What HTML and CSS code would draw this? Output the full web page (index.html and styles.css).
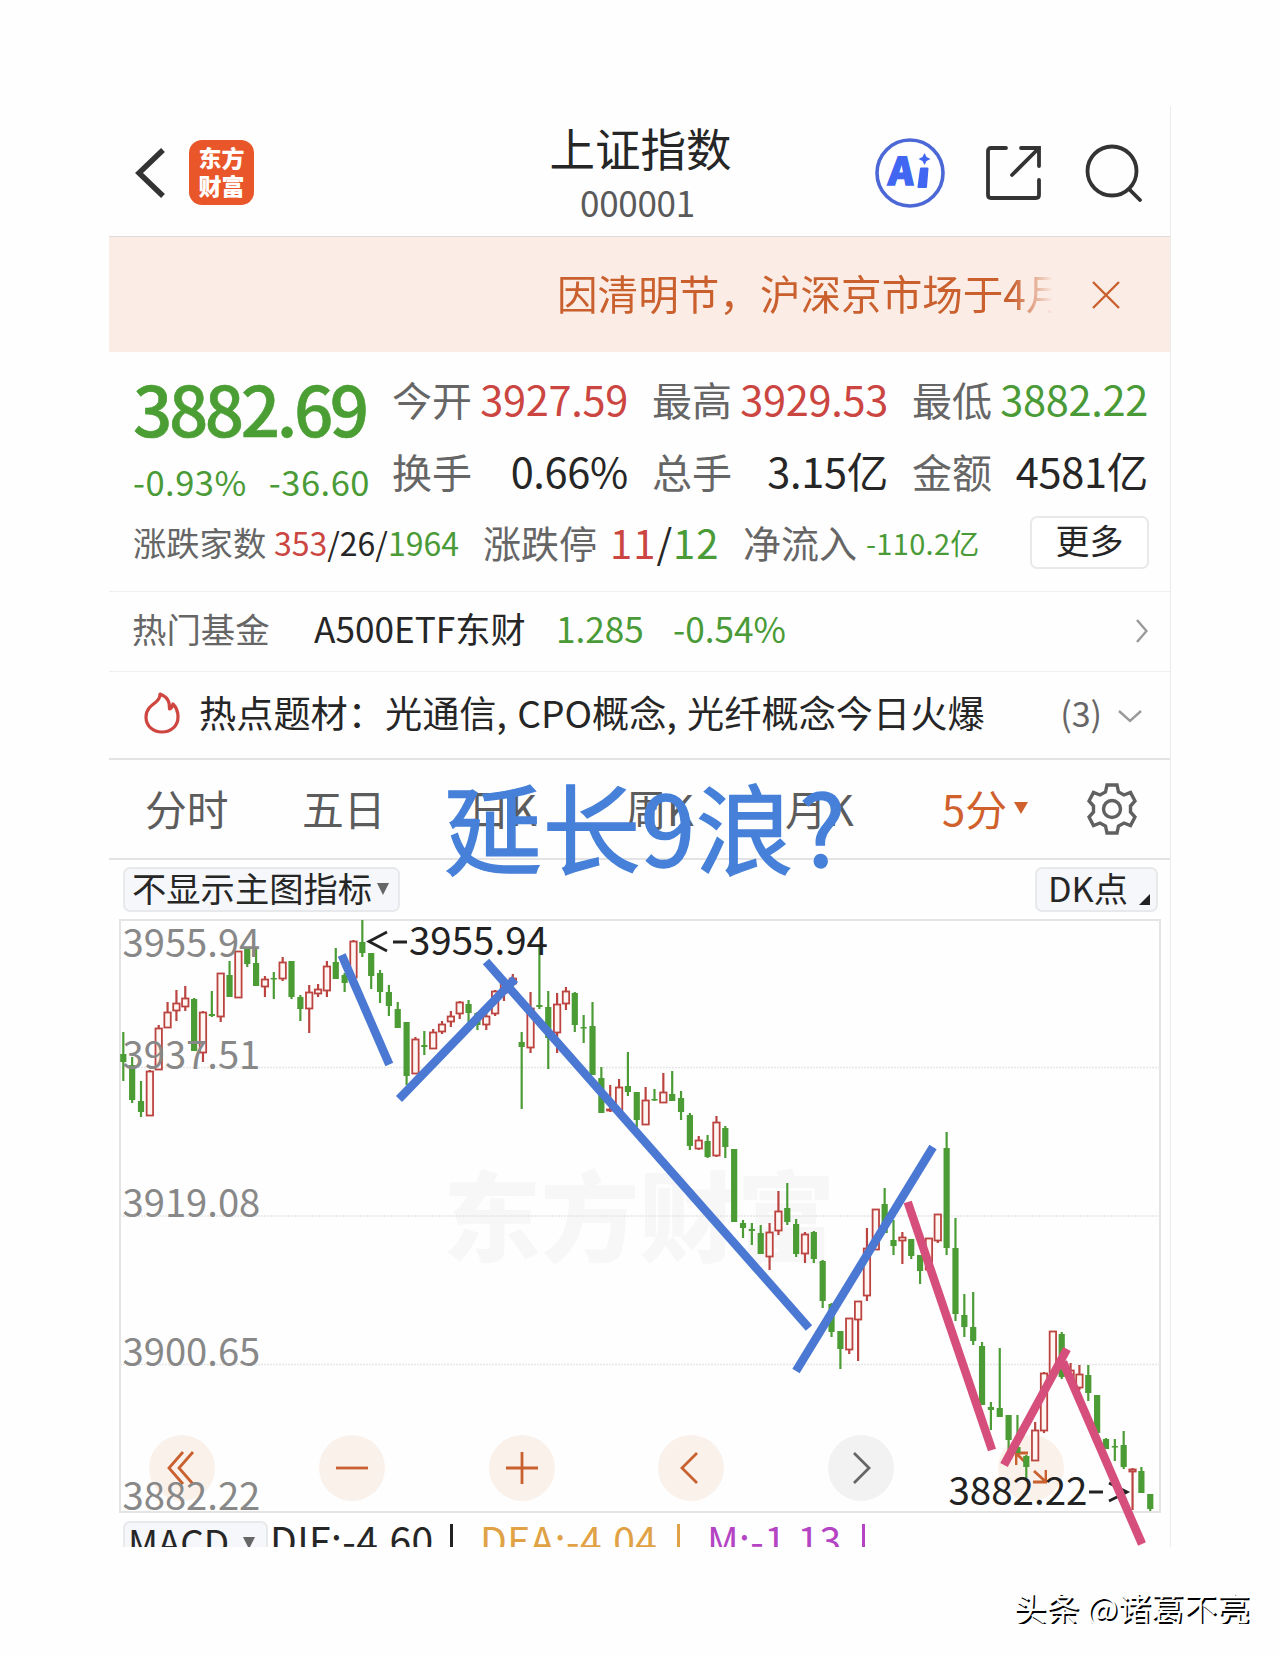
FILE: index.html
```html
<!DOCTYPE html>
<html lang="zh-CN">
<head>
  <meta charset="UTF-8">
  <meta name="viewport" content="width=device-width, initial-scale=1.0">
  <title>上证指数 000001</title>
  <link rel="stylesheet" href="styles.css">
</head>
<body>
  <div class="app">
    <header>
      <div class="header-left">
        <svg class="back" width="34" height="54" viewBox="0 0 34 54"><path d="M29 4 L5 27 L29 50"/></svg>
        <div class="logo">东方<br>财富</div>
      </div>
      <div class="title">
        <h1>上证指数</h1>
        <span>000001</span>
      </div>
      <div class="header-icons">
        <svg width="70" height="70" viewBox="0 0 70 70">
          <circle cx="35" cy="35" r="33" fill="none" stroke="#4c68d6" stroke-width="3.6"/>
          <text x="16" y="47" class="ai-text" transform="skewX(-4)">A</text>
          <path d="M46 30.500 h6.500 l-1.500 18.500 h-7.500z" fill="#4066f2" stroke="#4066f2" stroke-width="2" stroke-linejoin="round"/>
          <path d="M49.500 15 l2 4 4 2 -4 2 -2 4 -2 -4 -4 -2 4 -2z" fill="#4066f2"/>
        </svg>
        <svg class="line-icon share" width="56" height="56" viewBox="0 0 56 56"><path d="M20 3 H5 Q2 3 2 6 V50 Q2 53 5 53 H50 Q53 53 53 50 V35 M35 3 H53 V21 M53 3 L26 30"/></svg>
        <svg class="line-icon" width="58" height="58" viewBox="0 0 58 58"><circle cx="27" cy="27" r="24.5"/><path d="M44 45 L55 56"/></svg>
      </div>
    </header>

    <div class="notice">
      <div class="notice-text">因清明节，沪深京市场于4月</div>
      <svg width="28" height="28" viewBox="0 0 28 28"><path d="M1 1 L27 27 M27 1 L1 27"/></svg>
    </div>

    <section class="quote">
      <div class="quote-top">
        <div class="price-box">
          <div class="price">3882.69</div>
          <div class="change"><span>-0.93%</span><span>-36.60</span></div>
        </div>
        <div class="stats">
          <div class="stat"><label>今开</label><b class="up">3927.59</b></div>
          <div class="stat"><label>最高</label><b class="up">3929.53</b></div>
          <div class="stat"><label>最低</label><b class="down">3882.22</b></div>
          <div class="stat"><label>换手</label><b>0.66%</b></div>
          <div class="stat"><label>总手</label><b>3.15亿</b></div>
          <div class="stat"><label>金额</label><b>4581亿</b></div>
        </div>
      </div>
      <div class="quote-bottom">
        <label class="l1">涨跌家数</label>
        <div class="v1"><span class="up">353</span>/26/<span class="down">1964</span></div>
        <label class="l2">涨跌停</label>
        <div class="v2"><span class="up">11</span>/<span class="down">12</span></div>
        <label class="l3">净流入</label>
        <div class="v3 down">-110.2亿</div>
        <button class="more">更多</button>
      </div>
    </section>

    <div class="fund">
      <label>热门基金</label>
      <span class="fund-name">A500ETF东财</span>
      <span class="down fund-price">1.285</span>
      <span class="down">-0.54%</span>
      <svg class="arrow" width="12" height="24" viewBox="0 0 12 24"><path d="M1 1 L10.500 12 L1 23"/></svg>
    </div>

    <div class="topic">
      <svg class="flame" width="36" height="42" viewBox="0 0 36 42"><path d="M16 2 C24 5 26 11 25.500 17 C28 16 28.500 14 29 12 C33 16 34 21 34 25 C34 34 27 40 18 40 C9 40 2 34 2 25 C2 17 8 13 12 10 C15 7.500 16 5 16 2 Z"/></svg>
      <span class="topic-text">热点题材：光通信, CPO概念, 光纤概念今日火爆</span>
      <span class="count">(3)</span>
      <svg class="arrow" width="24" height="13" viewBox="0 0 24 13"><path d="M1 1 L12 11 L23 1"/></svg>
    </div>

    <nav>
      <a>分时</a>
      <a>五日</a>
      <a>日K</a>
      <a>周K</a>
      <a>月K</a>
      <a class="active">5分<i></i></a>
      <svg class="gear" width="50" height="52" viewBox="0 0 50 52">
        <path d="M20 2 H30 L31.500 9 L37 12 L43.500 9.500 L48 18 L43.500 23 V29 L48 34 L43.500 42.500 L37 40 L31.500 43 L30 50 H20 L18.500 43 L13 40 L6.500 42.500 L2 34 L6.500 29 V23 L2 18 L6.500 9.500 L13 12 L18.500 9 Z"/>
        <circle cx="25" cy="26" r="8.500"/>
      </svg>
    </nav>

    <div class="indicator-bar">
      <button class="pill">不显示主图指标<i class="caret"></i></button>
      <button class="pill pill-dk">DK点<i class="corner"></i></button>
    </div>

    <div class="chart">
      <div class="chart-logo">东方财富</div>
      <div class="controls">
        <div class="ctrl"><svg width="32" height="34" viewBox="0 0 32 34"><path d="M17 1 L3 17 L17 33 M27 1 L13 17 L27 33"/></svg></div>
        <div class="ctrl"><svg width="32" height="34" viewBox="0 0 32 34"><path d="M0 17 H32"/></svg></div>
        <div class="ctrl"><svg width="32" height="34" viewBox="0 0 32 34"><path d="M0 17 H32 M16 1 V33"/></svg></div>
        <div class="ctrl"><svg width="32" height="34" viewBox="0 0 32 34"><path d="M22 2 L7 17 L22 32"/></svg></div>
        <div class="ctrl gray"><svg width="32" height="34" viewBox="0 0 32 34"><path d="M9 2 L24 17 L9 32"/></svg></div>
        <div class="ctrl"><svg width="32" height="34" viewBox="0 0 32 34"><path d="M13 2 H1 V14 M1 2 L12 13 M31 19 V31 H18 M31 31 L19 20"/></svg></div>
      </div>
      <svg class="plot" width="1040" height="592" viewBox="120 920 1040 592">
        <g class="grid">
          <path d="M120 1067.500 H1160"/>
          <path d="M120 1216 H1160"/>
          <path d="M120 1364.500 H1160"/>
        </g>
        <g id="candles"></g>
        <g class="axis">
          <text x="122.500" y="957">3955.94</text>
          <text x="122.500" y="1069">3937.51</text>
          <text x="122.500" y="1217">3919.08</text>
          <text x="122.500" y="1366">3900.65</text>
          <text x="122.500" y="1510">3882.22</text>
        </g>
        <g class="mark">
          <path d="M387 932 L369 941.500 L387 951 M393 942 H407"/>
          <text x="409" y="955">3955.94</text>
          <text x="948.500" y="1505">3882.22</text>
          <path d="M1089 1492 H1103 M1109 1483 L1127 1492 L1109 1501"/>
        </g>
      </svg>
    </div>

    <div class="macd">
      <button class="pill">MACD<i class="caret"></i></button>
      <span class="dif">DIF:-4.60</span><s></s>
      <span class="dea">DEA:-4.04</span><s class="s-dea"></s>
      <span class="m">M:-1.13</span><s class="s-m"></s>
    </div>

    <!-- hand drawn wave lines -->
    <svg class="waves" width="1062" height="1441" viewBox="109 106 1062 1441">
      <g stroke="#4a78d2">
        <path d="M341.700 955 L389.300 1064.500"/>
        <path d="M399 1099 L515 979"/>
        <path d="M486 961.500 L809 1328"/>
        <path d="M796 1371 L933 1147"/>
      </g>
      <g stroke="#d64f7c">
        <path d="M907.700 1202 L992 1450"/>
        <path d="M1004 1465 L1067 1349"/>
        <path d="M1063 1362 L1142 1544"/>
      </g>
    </svg>
    <div class="wave-title">延长9浪<span>?</span></div>
  </div>

  <footer>头条 @诸葛不亮</footer>

  <script src="chart.js"></script>
</body>
</html>
```
FILE: styles.css
```css
* {
  box-sizing: border-box;
}

body {
  margin: 0;
  background-color: #fefefe;
  font-family: "Noto Sans CJK SC", "Noto Sans", sans-serif;
  line-height: 1;
  color: #262626;
}

.app {
  position: relative;
  width: 1062px;
  height: 1441px;
  margin: 106px 0 0 109px;
  overflow: hidden;
  border-right: 1px solid #ececec;
}

svg {
  display: block;
  fill: none;
}

button {
  font-family: inherit;
  line-height: 1;
  color: inherit;
}

.up { color: #cb4541; }
.down { color: #4a9b37; }

/* header */
header {
  display: grid;
  grid-template-columns: 1fr auto 1fr;
  height: 131px;
  padding: 0 27px 0 25px;
  border-bottom: 1px solid #dedbd9;
}

.header-left {
  display: flex;
  align-items: center;
  height: 133px;
}

.back path {
  stroke: #333;
  stroke-width: 5.5;
}

.logo {
  width: 65px;
  height: 65px;
  margin-left: 21px;
  padding-top: 3px;
  border-radius: 13px;
  background-color: #e9562a;
  color: #fff;
  font-size: 23px;
  font-weight: 900;
  line-height: 28px;
  text-align: center;
}

.title {
  text-align: center;
  padding: 19px 0 0 4px;
}

.title h1 {
  margin: 0;
  font-size: 45.5px;
  font-weight: 400;
}

.title span {
  display: block;
  margin: 13px 6px 0 0;
  font-size: 35px;
  letter-spacing: -0.3px;
  color: #5a5a5a;
}

.header-icons {
  display: flex;
  align-items: center;
  justify-content: flex-end;
  height: 133px;
}

.ai-text {
  font-size: 38px;
  font-weight: 900;
  fill: #4066f2;
  stroke: #4066f2;
  stroke-width: 1.5;
}

.line-icon {
  stroke: #333;
  stroke-width: 3.8;
  stroke-linecap: round;
}

.share {
  margin: 0 43px 0 41px;
}

/* notice */
.notice {
  display: flex;
  align-items: center;
  height: 115px;
  padding-left: 448px;
  background-color: #fbede6;
}

.notice-text {
  width: 496px;
  overflow: hidden;
  white-space: nowrap;
  font-size: 40.6px;
  line-height: 56px;
  color: #c9602e;
  padding-bottom: 3px;
  -webkit-mask-image: linear-gradient(to right, #000 455px, transparent 496px);
  mask-image: linear-gradient(to right, #000 455px, transparent 496px);
}

.notice svg {
  margin-left: 39px;
  stroke: #c9602e;
  stroke-width: 2.4;
}

/* quote */
.quote {
  height: 240px;
  padding: 27px 22px 0 24px;
  border-bottom: 1px solid #efefef;
}

label {
  color: #666;
}

.quote-top {
  display: flex;
  height: 132px;
}

.price-box {
  width: 259px;
}

.price {
  margin-top: -6px;
  font-size: 69px;
  font-weight: 500;
  letter-spacing: -3.4px;
  color: #4a9e33;
  -webkit-text-stroke: 0.6px #4a9e33;
}

.change {
  display: flex;
  justify-content: space-between;
  width: 237px;
  margin-top: 22px;
  font-size: 34.5px;
  letter-spacing: 0.5px;
  color: #4a9b37;
}

.stats {
  display: grid;
  grid-template-columns: repeat(3, 236px);
  gap: 32px 24px;
  align-content: start;
}

.stat {
  display: flex;
  justify-content: space-between;
  align-items: center;
  height: 40px;
  font-size: 40px;
}

.stat b {
  font-size: 41.5px;
  font-weight: 400;
  letter-spacing: -0.3px;
}

.quote-bottom {
  display: flex;
  align-items: center;
  height: 54px;
  margin-top: 4px;
  white-space: nowrap;
}

.l1 { font-size: 33.3px; width: 141px; }
.v1 { font-size: 32px; width: 209px; }
.l2 { font-size: 38px; width: 127px; }
.v2 { font-size: 40px; width: 133px; letter-spacing: 1px; }
.l3 { font-size: 38px; width: 123px; }
.v3 { font-size: 29px; letter-spacing: 0.3px; }

.more {
  width: 119px;
  height: 53px;
  margin-left: auto;
  margin-right: -1px;
  padding: 0 0 5px;
  border: 2px solid #e9e9e9;
  border-radius: 7px;
  background: #fff;
  font-size: 34px;
}

/* hot fund */
.fund {
  display: flex;
  align-items: center;
  height: 80px;
  padding: 0 22px 7px 23px;
  border-bottom: 1px solid #efefef;
  font-size: 35.2px;
}

.fund label {
  width: 182px;
  font-size: 34.4px;
}

.fund-name {
  width: 242px;
}

.fund-price {
  width: 117px;
}

.arrow {
  margin-left: auto;
  stroke: #999;
  stroke-width: 2.4;
}

.fund .arrow {
  margin-top: 6px;
}

/* hot topic */
.topic {
  display: flex;
  align-items: center;
  height: 88px;
  padding: 0 28px 4px 35px;
  border-bottom: 2px solid #e3e3e3;
}

.flame {
  stroke: #cf4540;
  stroke-width: 3.2;
  stroke-linejoin: round;
}

.topic-text {
  margin-left: 19px;
  font-size: 37.2px;
  word-spacing: 2px;
  white-space: nowrap;
}

.count {
  margin-left: auto;
  margin-right: 16px;
  font-size: 34px;
  color: #666;
}

.topic .arrow {
  margin-left: 0;
  margin-top: 6px;
}

/* period tabs */
nav {
  display: flex;
  align-items: center;
  height: 100px;
  padding: 0 33px 1px 36px;
  border-bottom: 2px solid #e3e3e3;
  font-size: 41.8px;
  color: #5c5c5c;
}

nav a {
  flex: none;
  width: 157px;
}

nav a:nth-child(2) { width: 166px; }
nav a:nth-child(4) { width: 160px; }

nav .active {
  display: flex;
  align-items: center;
  width: auto;
  color: #d0602c;
}

nav .active i {
  margin: 0 0 0 7px;
  border: 7px solid transparent;
  border-top: 12px solid #d0602c;
  border-bottom: 0;
}

.gear {
  flex: none;
  margin-left: auto;
  stroke: #606060;
  stroke-width: 3.4;
}

/* indicator pills */
.indicator-bar {
  display: flex;
  justify-content: space-between;
  height: 59px;
  padding: 7px 12px 0 14px;
}

.pill {
  display: flex;
  align-items: center;
  width: 277px;
  height: 45px;
  padding: 0 0 4px 7px;
  border: 2px solid #e8e9eb;
  border-radius: 7px;
  background-color: #f6f7fa;
  font-size: 34.3px;
  white-space: nowrap;
}

.caret {
  margin: 3px 0 0 5px;
  border: 6.5px solid transparent;
  border-top: 12px solid #666;
  border-bottom: 0;
}

.pill-dk {
  width: 123px;
  padding-left: 11px;
}

.corner {
  align-self: flex-end;
  margin: 0 0 1px 11px;
  border-left: 11px solid transparent;
  border-bottom: 11px solid #222;
}

/* chart */
.chart {
  position: relative;
  width: 1042px;
  height: 594px;
  margin-left: 10px;
  border: 2px solid #e4e4e4;
}

.plot {
  position: absolute;
  left: -1px;
  top: -1px;
  overflow: visible;
}

.chart-logo {
  position: absolute;
  left: 322px;
  top: 241px;
  font-size: 98px;
  font-weight: 900;
  color: #f7f7f7;
}

.controls {
  position: absolute;
  left: 28px;
  right: 95px;
  top: 514px;
  display: flex;
  justify-content: space-between;
}

.ctrl {
  display: flex;
  align-items: center;
  justify-content: center;
  width: 66px;
  height: 66px;
  border-radius: 50%;
  background-color: #fbf1eb;
  stroke: #c8602f;
  stroke-width: 2.8;
}

.ctrl.gray {
  background-color: #f2f2f2;
  stroke: #666;
}

.grid path {
  stroke: #e6e6e6;
  stroke-width: 1.5;
  stroke-dasharray: 2 1;
}

.axis text {
  font-size: 38.2px;
  fill: #888;
}

.mark text {
  font-size: 38.5px;
  fill: #222;
}

.mark path {
  stroke: #222;
  stroke-width: 2.8;
}

/* macd row, cut by the bottom of the screen */
.macd {
  display: flex;
  align-items: flex-start;
  padding: 8px 0 0 14px;
  font-size: 39px;
  white-space: nowrap;
}

.macd .pill {
  align-items: flex-start;
  width: 145px;
  height: 50px;
  padding: 0 0 0 3px;
  font-size: 37px;
}

.macd .caret {
  margin: 14px 0 0 14px;
}

.macd span {
  margin-top: -1px;
  letter-spacing: 0.4px;
}

.dif { margin-left: 2px; width: 180px; }
.dea { width: 197px; color: #e0a244; }
.m { width: 155px; color: #b444c4; }

.macd s {
  width: 3px;
  height: 40px;
  margin-top: 3px;
  background-color: #222;
}

.macd .s-dea { background-color: #e0a244; }
.macd .s-m { background-color: #b444c4; }
.macd s + span { margin-left: 27px; }

.waves {
  position: absolute;
  left: 0;
  top: 0;
  stroke-width: 8.5;
}

.wave-title {
  position: absolute;
  left: 335px;
  top: 669px;
  font-size: 98px;
  letter-spacing: 0.4px;
  color: #4680d9;
  -webkit-text-stroke: 1.4px #4680d9;
  white-space: nowrap;
}

.wave-title span {
  margin-left: 5px;
}

footer {
  margin: 44px 30px 0 0;
  text-align: right;
  font-size: 33px;
  color: #fff;
  text-shadow: 1.5px 1.5px 0 #000;
}
```
FILE: chart.js
```js
// each candle: colour, high, body top, body bottom, low
const candles = [
  ['g', 1032, 1054, 1062, 1081], ['g', 1057, 1065, 1100, 1103], ['g', 1081, 1101, 1112, 1117],
  ['r', 1070, 1071, 1116, 1116], ['r', 1025, 1028, 1070, 1070], ['r', 1002, 1012, 1028, 1028],
  ['r', 990, 1003, 1011, 1021], ['r', 986, 998, 1007, 1011], ['g', 998, 999, 1051, 1051],
  ['r', 1011, 1012, 1053, 1062], ['g', 991, 1014, 1016, 1017], ['r', 973, 973, 1017, 1022],
  ['g', 961, 975, 997, 997], ['r', 951, 951, 998, 998], ['g', 948, 949, 964, 967],
  ['g', 948, 963, 986, 986], ['r', 976, 979, 987, 997], ['g', 972, 978, 979, 999],
  ['r', 957, 962, 979, 981], ['g', 961, 961, 997, 999], ['g', 995, 997, 1009, 1021],
  ['r', 985, 992, 1009, 1033], ['r', 984, 989, 994, 997], ['r', 961, 966, 991, 997],
  ['g', 948, 962, 979, 979], ['g', 973, 975, 983, 992], ['r', 940, 941, 978, 980],
  ['g', 920, 942, 953, 957], ['g', 953, 953, 976, 989], ['g', 970, 973, 992, 1003],
  ['g', 985, 992, 1006, 1016], ['g', 1002, 1009, 1028, 1028], ['g', 1022, 1022, 1076, 1085],
  ['r', 1037, 1039, 1074, 1074], ['g', 1031, 1045, 1047, 1055], ['r', 1029, 1032, 1049, 1049],
  ['r', 1021, 1024, 1032, 1034], ['r', 1011, 1016, 1022, 1027], ['r', 1001, 1002, 1014, 1019],
  ['g', 1000, 1004, 1013, 1022], ['g', 1012, 1013, 1025, 1030], ['r', 1013, 1016, 1025, 1030],
  ['r', 990, 991, 1014, 1016], ['r', 982, 983, 993, 1001], ['r', 974, 978, 984, 984],
  ['g', 1032, 1042, 1047, 1109], ['r', 992, 1008, 1048, 1053], ['g', 947, 1005, 1007, 1009],
  ['g', 991, 1007, 1038, 1069], ['r', 993, 1004, 1033, 1053], ['r', 987, 991, 1004, 1010],
  ['g', 992, 993, 1025, 1032], ['g', 1015, 1027, 1028, 1043], ['g', 1002, 1026, 1075, 1075],
  ['g', 1067, 1078, 1113, 1113], ['r', 1085, 1109, 1111, 1112], ['r', 1079, 1087, 1111, 1111],
  ['g', 1052, 1086, 1092, 1096], ['g', 1092, 1092, 1120, 1127], ['r', 1087, 1100, 1125, 1125],
  ['g', 1089, 1099, 1100, 1101], ['r', 1073, 1092, 1103, 1103], ['g', 1071, 1094, 1101, 1101],
  ['g', 1091, 1098, 1112, 1120], ['g', 1113, 1115, 1146, 1150], ['r', 1136, 1140, 1149, 1150],
  ['g', 1135, 1141, 1157, 1158], ['r', 1116, 1122, 1156, 1157], ['g', 1126, 1128, 1147, 1158],
  ['g', 1149, 1149, 1222, 1222], ['g', 1220, 1223, 1228, 1238], ['g', 1223, 1229, 1231, 1245],
  ['g', 1225, 1233, 1254, 1254], ['r', 1223, 1232, 1257, 1270], ['r', 1191, 1211, 1231, 1235],
  ['g', 1183, 1208, 1222, 1225], ['g', 1219, 1224, 1254, 1257], ['r', 1232, 1234, 1254, 1263],
  ['g', 1231, 1232, 1259, 1263], ['g', 1260, 1261, 1301, 1308], ['g', 1303, 1304, 1332, 1337],
  ['g', 1331, 1331, 1349, 1369], ['r', 1318, 1318, 1350, 1354], ['r', 1301, 1301, 1320, 1361],
  ['r', 1228, 1248, 1296, 1301], ['r', 1209, 1209, 1250, 1250], ['g', 1188, 1204, 1233, 1233],
  ['g', 1220, 1240, 1246, 1255], ['r', 1232, 1237, 1241, 1264], ['g', 1239, 1239, 1256, 1259],
  ['g', 1255, 1255, 1271, 1284], ['r', 1238, 1238, 1270, 1270], ['r', 1214, 1214, 1241, 1243],
  ['g', 1132, 1148, 1248, 1255], ['g', 1218, 1248, 1314, 1321], ['g', 1294, 1315, 1327, 1337],
  ['g', 1292, 1327, 1341, 1345], ['g', 1342, 1346, 1405, 1405], ['g', 1402, 1407, 1410, 1430],
  ['g', 1348, 1408, 1417, 1417], ['g', 1415, 1415, 1440, 1450], ['g', 1415, 1447, 1453, 1453],
  ['g', 1455, 1456, 1467, 1478], ['r', 1422, 1430, 1461, 1461], ['r', 1372, 1373, 1431, 1433],
  ['r', 1331, 1331, 1373, 1373], ['g', 1332, 1334, 1377, 1379], ['r', 1363, 1370, 1380, 1383],
  ['r', 1365, 1374, 1388, 1390], ['g', 1365, 1375, 1393, 1401], ['g', 1395, 1395, 1433, 1433],
  ['g', 1438, 1439, 1449, 1449], ['g', 1439, 1446, 1447, 1461], ['g', 1431, 1445, 1467, 1469],
  ['r', 1468, 1469, 1472, 1510], ['g', 1467, 1471, 1493, 1493], ['g', 1494, 1494, 1509, 1511]
];

const START_X = 123.3;
const STEP = 8.853;
let html = '';

candles.forEach(([type, high, top, bottom, low], i) => {
  const x = START_X + i * STEP;
  const color = type === 'g' ? '#4c9c36' : '#bb4440';
  html += `<path d="M${x} ${high} V${low}" stroke="${color}" stroke-width="2.2"/>`;
  if (type === 'g') {
    html += `<rect x="${x - 3.1}" y="${top}" width="6.2" height="${Math.max(bottom - top, 1.5)}" fill="${color}"/>`;
  } else {
    html += `<rect x="${x - 3.2}" y="${top + 0.5}" width="6.4" height="${Math.max(bottom - top - 1, 1)}" fill="#fff6f4" stroke="${color}" stroke-width="1.8"/>`;
  }
});

document.getElementById('candles').innerHTML = html;
```
